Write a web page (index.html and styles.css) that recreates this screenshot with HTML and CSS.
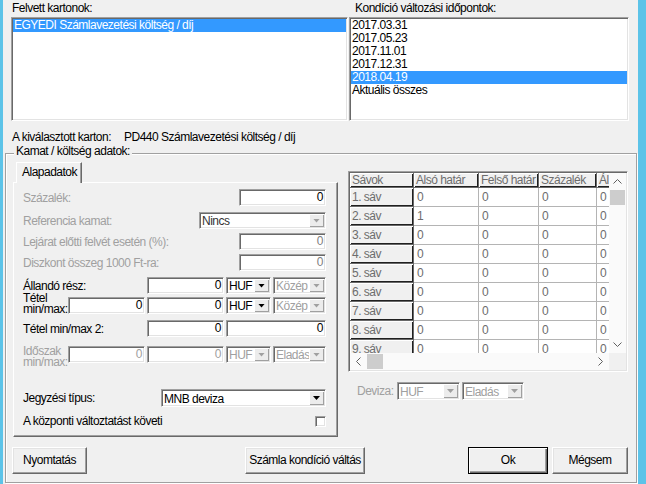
FILE: index.html
```html
<!DOCTYPE html>
<html lang="hu">
<head>
<meta charset="utf-8">
<title>Kamat / költség adatok</title>
<link rel="stylesheet" href="styles.css">
</head>
<body>
<div class="window">
  <div class="lists">
    <div class="list-col list-left">
      <div class="cap">Felvett kartonok:</div>
      <div class="listbox">
        <div class="item sel">EGYEDI Számlavezetési költség / díj</div>
      </div>
    </div>
    <div class="list-col list-right">
      <div class="cap cap-right">Kondíció változási időpontok:</div>
      <div class="listbox">
        <div class="item">2017.03.31</div>
        <div class="item">2017.05.23</div>
        <div class="item">2017.11.01</div>
        <div class="item">2017.12.31</div>
        <div class="item sel">2018.04.19</div>
        <div class="item">Aktuális összes</div>
      </div>
    </div>
  </div>

  <div class="selected">
    <span class="sel-label">A kiválasztott karton:</span>
    <span>PD440 Számlavezetési költség / díj</span>
  </div>

  <div class="group">
    <div class="legend">Kamat / költség adatok:</div>
    <div class="group-main">
      <div class="tabs">
        <div class="tabstrip"><div class="tab">Alapadatok</div></div>
        <div class="tabpanel">
          <div class="row">
            <span class="lbl dis">Százalék:</span>
            <div class="edit w87">0</div>
          </div>
          <div class="row mt6">
            <span class="lbl dis">Referencia kamat:</span>
            <div class="combo w127"><span class="ctext dark">Nincs</span><span class="dd off"></span></div>
          </div>
          <div class="row mt4">
            <span class="lbl dis">Lejárat előtti felvét esetén (%):</span>
            <div class="edit w87 mid">0</div>
          </div>
          <div class="row mt4">
            <span class="lbl dis">Diszkont összeg 1000 Ft-ra:</span>
            <div class="edit w87 mid">0</div>
          </div>
          <div class="row mt6">
            <span class="lbl">Állandó rész:</span>
            <div class="edit w77">0</div>
            <div class="combo w45"><span class="ctext">HUF</span><span class="dd"></span></div>
            <div class="combo w53"><span class="ctext light">Közép</span><span class="dd off"></span></div>
          </div>
          <div class="row mt3">
            <span class="lbl lbl2 up4">Tétel<br>min/max:</span>
            <div class="edit w77">0</div>
            <div class="edit w77">0</div>
            <div class="combo w45"><span class="ctext">HUF</span><span class="dd"></span></div>
            <div class="combo w53"><span class="ctext light">Közép</span><span class="dd off"></span></div>
          </div>
          <div class="row mt6">
            <span class="lbl">Tétel min/max 2:</span>
            <div class="edit w77">0</div>
            <div class="edit w100">0</div>
          </div>
          <div class="row mt9">
            <span class="lbl lbl2 dis">Időszak<br>min/max:</span>
            <div class="edit w77 light">0</div>
            <div class="edit w77 light">0</div>
            <div class="combo w45"><span class="ctext light">HUF</span><span class="dd off"></span></div>
            <div class="combo w53"><span class="ctext light">Eladás</span><span class="dd off"></span></div>
          </div>
          <div class="row row-tall mt26">
            <span class="lbl">Jegyzési típus:</span>
            <div class="combo combo-tall w165"><span class="ctext">MNB deviza</span><span class="dd"></span></div>
          </div>
          <div class="row row-chk mt8">
            <span class="lbl">A központi változtatást követi</span>
            <span class="chk"></span>
          </div>
        </div>
      </div>

      <div class="rcol">
        <div class="grid">
          <div class="cells">
            <div class="fx">Sávok</div><div class="fx">Alsó határ</div><div class="fx">Felső határ</div><div class="fx">Százalék</div><div class="fx">Ál</div>
            <div class="fx">1. sáv</div><div class="dc">0</div><div class="dc">0</div><div class="dc">0</div><div class="dc">0</div>
            <div class="fx">2. sáv</div><div class="dc">1</div><div class="dc">0</div><div class="dc">0</div><div class="dc">0</div>
            <div class="fx">3. sáv</div><div class="dc">0</div><div class="dc">0</div><div class="dc">0</div><div class="dc">0</div>
            <div class="fx">4. sáv</div><div class="dc">0</div><div class="dc">0</div><div class="dc">0</div><div class="dc">0</div>
            <div class="fx">5. sáv</div><div class="dc">0</div><div class="dc">0</div><div class="dc">0</div><div class="dc">0</div>
            <div class="fx">6. sáv</div><div class="dc">0</div><div class="dc">0</div><div class="dc">0</div><div class="dc">0</div>
            <div class="fx">7. sáv</div><div class="dc">0</div><div class="dc">0</div><div class="dc">0</div><div class="dc">0</div>
            <div class="fx">8. sáv</div><div class="dc">0</div><div class="dc">0</div><div class="dc">0</div><div class="dc">0</div>
            <div class="fx">9. sáv</div><div class="dc">0</div><div class="dc">0</div><div class="dc">0</div><div class="dc">0</div>
          </div>
          <div class="vscroll">
            <div class="sbtn"><svg width="9" height="5" viewBox="0 0 9 5"><polyline points="0.5,4.5 4.5,0.5 8.5,4.5" fill="none" stroke="#606060"/></svg></div>
            <div class="vthumb"></div>
            <div class="track"></div>
            <div class="sbtn"><svg width="9" height="5" viewBox="0 0 9 5"><polyline points="0.5,0.5 4.5,4.5 8.5,0.5" fill="none" stroke="#606060"/></svg></div>
          </div>
          <div class="hscroll">
            <div class="sbtn"><svg width="5" height="9" viewBox="0 0 5 9"><polyline points="4.5,0.5 0.5,4.5 4.5,8.5" fill="none" stroke="#606060"/></svg></div>
            <div class="hthumb"></div>
            <div class="track"></div>
            <div class="sbtn"><svg width="5" height="9" viewBox="0 0 5 9"><polyline points="0.5,0.5 4.5,4.5 0.5,8.5" fill="none" stroke="#606060"/></svg></div>
          </div>
          <div class="corner"></div>
        </div>
        <div class="deviza">
          <span class="dev-lbl dis">Deviza:</span>
          <div class="combo combo-tall w63"><span class="ctext light">HUF</span><span class="dd off"></span></div>
          <div class="combo combo-tall w62 ml8"><span class="ctext light">Eladás</span><span class="dd off"></span></div>
        </div>
      </div>
    </div>

    <div class="buttons">
      <div class="btn b-print">Nyomtatás</div>
      <div class="btn b-switch">Számla kondíció váltás</div>
      <div class="btn btn-default b-ok">Ok</div>
      <div class="btn b-cancel">Mégsem</div>
    </div>
  </div>
</div>
</body>
</html>
```

FILE: styles.css
```css
* { box-sizing: border-box; margin: 0; padding: 0; }
html, body { width: 646px; height: 484px; overflow: hidden; }
body {
  background: #f0f0f0;
  font-family: "Liberation Sans", Arial, sans-serif;
  font-size: 12px;
  letter-spacing: -0.5px;
  line-height: 14px;
  color: #000;
}
.window {
  width: 646px;
  height: 484px;
  border-left: 3px solid #5cc3e8;
  border-right: 8px solid #5cc3e8;
  padding-top: 1px;
}

/* top lists */
.lists { display: flex; margin-left: 8px; }
.list-left { width: 337px; }
.list-right { width: 280px; margin-left: 1px; }
.cap { height: 15px; line-height: 14px; padding-left: 1px; margin-bottom: 1px; white-space: nowrap; }
.cap-right { padding-left: 6px; }
.listbox {
  height: 104px;
  background: #fff;
  border: 1px solid;
  border-color: #a0a0a0 #fff #fff #a0a0a0;
  box-shadow: inset 1px 1px 0 #696969, inset -1px -1px 0 #e3e3e3;
  padding: 1px;
  overflow: hidden;
}
.item { height: 13px; line-height: 13px; padding-left: 1px; white-space: nowrap; }
.sel { background: #3399ff; color: #fff; }

.selected { display: flex; margin: 9px 0 0 9px; height: 14px; white-space: nowrap; }
.sel-label { width: 112px; }

/* group box */
.group {
  margin: 9px 0 0 2px;
  width: 632px;
  height: 330px;
  border: 1px solid #a0a0a0;
  box-shadow: inset 1px 1px 0 #fff, 1px 1px 0 #fff;
}
.legend {
  width: max-content;
  height: 14px;
  margin: -10px 0 0 8px;
  padding: 0 2px;
  background: #f0f0f0;
}
.group-main { display: flex; align-items: flex-start; margin-top: 4px; padding-left: 7px; }

/* tab control */
.tabs { width: 325px; height: 275px; display: flex; flex-direction: column; }
.tabstrip { height: 20px; padding-left: 3px; }
.tab {
  position: relative;
  z-index: 1;
  width: 66px;
  height: 21px;
  background: #f0f0f0;
  border-top: 1px solid #fff;
  border-left: 1px solid #fff;
  border-right: 1px solid #696969;
  box-shadow: inset -1px 0 0 #a0a0a0;
  padding-left: 5px;
  line-height: 18px;
}
.tabpanel {
  height: 255px;
  border: 1px solid;
  border-color: #fff #696969 #696969 #fff;
  box-shadow: inset -1px -1px 0 #a0a0a0;
  padding: 6px 11px 0 9px;
}

.row { display: flex; align-items: center; height: 17px; }
.row-tall { height: 18px; }
.row-chk { height: 13px; line-height: 13px; }
.mt3 { margin-top: 3px; }
.mt4 { margin-top: 4px; }
.mt6 { margin-top: 6px; }
.mt8 { margin-top: 8px; }
.mt9 { margin-top: 9px; }
.mt26 { margin-top: 26px; }
.lbl { flex: 1 1 0; min-width: 0; white-space: nowrap; }
.lbl2 { line-height: 11px; align-self: flex-start; }
.up4 { margin-top: -4px; }
.dis { color: #a0a0a0; }

.edit, .combo {
  height: 17px;
  background: #fff;
  border: 1px solid;
  border-color: #a0a0a0 #fff #fff #a0a0a0;
  box-shadow: inset 1px 1px 0 #696969, inset -1px -1px 0 #e3e3e3;
  flex: none;
}
.edit { text-align: right; padding-right: 2px; line-height: 15px; }
.edit + .edit, .edit + .combo, .combo + .combo { margin-left: 2px; }
.edit.mid { color: #808080; }
.edit.light { color: #a0a0a0; }
.w45 { width: 45px; }
.w53 { width: 53px; }
.w62 { width: 62px; }
.w63 { width: 63px; }
.w77 { width: 77px; }
.w87 { width: 87px; }
.w100 { width: 100px; }
.w127 { width: 127px; }
.w165 { width: 165px; }
.ml8 { margin-left: 8px; }

.combo { display: flex; padding: 1px; }
.combo-tall { height: 18px; }
.ctext { flex: 1; min-width: 0; padding-left: 1px; line-height: 15px; white-space: nowrap; overflow: hidden; }
.combo-tall .ctext { line-height: 16px; }
.ctext.light { color: #a0a0a0; }
.ctext.dark { color: #333; }
.dd {
  width: 15px;
  flex: none;
  background: #ececec;
  box-shadow: inset 1px 1px 0 #fff, inset -1px -1px 0 #a0a0a0;
  display: flex;
  align-items: center;
  justify-content: center;
}
.dd::after {
  content: "";
  width: 7px;
  height: 4px;
  background: #000;
  clip-path: polygon(0 0, 100% 0, 50% 100%);
}
.dd.off::after { background: #a0a0a0; }

.chk {
  width: 11px;
  height: 11px;
  flex: none;
  background: #fff;
  border: 1px solid;
  border-color: #a0a0a0 #fff #fff #a0a0a0;
  box-shadow: inset 1px 1px 0 #696969, inset -1px -1px 0 #e3e3e3;
}

/* right column / string grid */
.rcol { width: 280px; margin-left: 10px; padding-top: 9px; }
.grid {
  width: 280px;
  height: 201px;
  border: 1px solid;
  border-color: #a0a0a0 #fff #fff #a0a0a0;
  box-shadow: inset 1px 1px 0 #696969, inset -1px -1px 0 #e3e3e3;
  padding: 1px;
  display: grid;
  grid-template-columns: 1fr 17px;
  grid-template-rows: 1fr 17px;
  background: #fff;
}
.cells {
  overflow: hidden;
  display: grid;
  grid-template-columns: 64px 65px 60px 58px 40px;
  grid-template-rows: 15px;
  grid-auto-rows: 19px;
  align-content: start;
  color: #6d6d6d;
}
.fx, .dc {
  padding-left: 2px;
  white-space: nowrap;
  overflow: hidden;
  border-right: 1px solid;
  border-bottom: 1px solid;
  line-height: 18px;
}
.fx {
  background: #f0f0f0;
  border-color: #696969;
  box-shadow: inset 1px 1px 0 #fff, inset -1px -1px 0 #202020;
}
.cells > .fx:nth-child(-n+5) { line-height: 14px; }
.dc { background: #fff; border-color: #b4b4b4; padding-left: 3px; }

.vscroll { display: flex; flex-direction: column; background: #fafafa; }
.hscroll { display: flex; background: #fafafa; }
.sbtn { width: 17px; height: 17px; flex: none; display: flex; align-items: center; justify-content: center; }
.vthumb { height: 15px; margin: 0 1px; background: #cdcdcd; flex: none; }
.hthumb { width: 16px; margin: 1px 0; background: #cdcdcd; flex: none; }
.track { flex: 1; }
.corner { background: #f0f0f0; }

.deviza { display: flex; align-items: center; height: 18px; margin-top: 10px; padding-left: 9px; }
.dev-lbl { width: 40px; }

/* buttons */
.buttons { display: flex; margin-top: 10px; height: 27px; }
.btn {
  height: 27px;
  background: #f0f0f0;
  border: 1px solid;
  border-color: #fff #696969 #696969 #fff;
  box-shadow: inset -1px -1px 0 #a0a0a0, inset 1px 1px 0 #e3e3e3;
  text-align: center;
  line-height: 25px;
  white-space: nowrap;
}
.btn-default {
  border-color: #000;
  box-shadow: inset 1px 1px 0 #fff, inset -1px -1px 0 #696969, inset -2px -2px 0 #a0a0a0;
}
.b-print { width: 75px; margin-left: 6px; }
.b-switch { width: 120px; margin-left: 158px; }
.b-ok { width: 80px; margin-left: 103px; }
.b-cancel { width: 76px; margin-left: 4px; }
```
